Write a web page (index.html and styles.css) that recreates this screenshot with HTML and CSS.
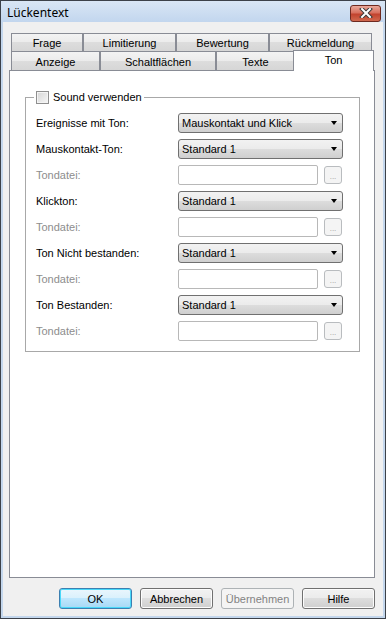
FILE: index.html
```html
<!DOCTYPE html>
<html lang="de">
<head>
  <meta charset="UTF-8">
  <title>Lückentext</title>
  <link rel="stylesheet" href="styles.css">
</head>
<body>
  <div class="window">
    <!-- Title bar -->
    <div class="titlebar">
      <span class="title">Lückentext</span>
      <div class="close">
        <svg width="14" height="10" viewBox="0 0 14 10">
          <path d="M3 1 L11 9 M11 1 L3 9" stroke="#3a3a3a" stroke-width="4" stroke-linecap="square"/>
          <path d="M3 1 L11 9 M11 1 L3 9" stroke="#ffffff" stroke-width="2" stroke-linecap="square"/>
        </svg>
      </div>
    </div>

    <div class="client">
      <!-- Tabs -->
      <div class="tab-row">
        <div class="tab tab-frage">Frage</div>
        <div class="tab tab-limit">Limitierung</div>
        <div class="tab tab-bewertung">Bewertung</div>
        <div class="tab tab-rueck">Rückmeldung</div>
      </div>
      <div class="tab-row front">
        <div class="tab tab-anzeige">Anzeige</div>
        <div class="tab tab-schalt">Schaltflächen</div>
        <div class="tab tab-texte">Texte</div>
        <div class="tab tab-ton selected">Ton</div>
      </div>

      <!-- Tab page -->
      <div class="panel">
        <fieldset class="group">
          <legend>
            <span class="checkbox"></span>
            <span>Sound verwenden</span>
          </legend>
          <div class="form">
            <label>Ereignisse mit Ton:</label>
            <div class="combo"><span>Mauskontakt und Klick</span><i class="arrow"></i></div>

            <label>Mauskontakt-Ton:</label>
            <div class="combo"><span>Standard 1</span><i class="arrow"></i></div>

            <label class="disabled">Tondatei:</label>
            <div class="file"><div class="textbox"></div><div class="browse">...</div></div>

            <label>Klickton:</label>
            <div class="combo"><span>Standard 1</span><i class="arrow"></i></div>

            <label class="disabled">Tondatei:</label>
            <div class="file"><div class="textbox"></div><div class="browse">...</div></div>

            <label>Ton Nicht bestanden:</label>
            <div class="combo"><span>Standard 1</span><i class="arrow"></i></div>

            <label class="disabled">Tondatei:</label>
            <div class="file"><div class="textbox"></div><div class="browse">...</div></div>

            <label>Ton Bestanden:</label>
            <div class="combo"><span>Standard 1</span><i class="arrow"></i></div>

            <label class="disabled">Tondatei:</label>
            <div class="file"><div class="textbox"></div><div class="browse">...</div></div>
          </div>
        </fieldset>
      </div>

      <!-- Dialog buttons -->
      <div class="buttons">
        <button class="default">OK</button>
        <button>Abbrechen</button>
        <button disabled>Übernehmen</button>
        <button>Hilfe</button>
      </div>
    </div>
  </div>
</body>
</html>
```

FILE: styles.css
```css
* {
  margin: 0;
  padding: 0;
  box-sizing: border-box;
}

body {
  width: 386px;
  height: 619px;
  overflow: hidden;
  font-family: "Liberation Sans", Arial, sans-serif;
  font-size: 11px;
  color: #000;
  background: #fff;
}

.window {
  width: 386px;
  height: 619px;
  display: flex;
  flex-direction: column;
  border: 1px solid #3c4149;
  padding: 0 2px 2px 2px;
  background: #c4d7ed;
}

/* Title bar */
.titlebar {
  height: 21px;
  margin: 0 -2px;
  padding: 0 4px 0 6px;
  display: flex;
  align-items: center;
  background: linear-gradient(#d9e6f5, #c2d6ee);
}

.title {
  font-family: "Noto Sans", "Open Sans", sans-serif;
  font-size: 12px;
  padding-top: 1px;
}

.close {
  margin-left: auto;
  width: 31px;
  height: 17px;
  margin-top: 3px;
  border: 1px solid #6e2a20;
  border-radius: 3px;
  background: linear-gradient(#e9a99b, #d8705e 45%, #c2432e 55%, #d0684e);
  display: flex;
  align-items: center;
  justify-content: center;
}

.client {
  flex: 1;
  display: flex;
  flex-direction: column;
  background: #f0f0f0;
  padding: 11px 8px 0 6px;
}

/* Tabs */
.tab-row {
  display: flex;
  margin-left: 2px;
}

.tab {
  height: 18px;
  border: 1px solid #898c95;
  border-bottom: none;
  background: linear-gradient(#f3f3f3, #ebebeb 50%, #dddddd 50%, #d6d6d6);
  display: flex;
  align-items: center;
  justify-content: center;
  padding-top: 1px;
}

.front .tab {
  height: 19px;
}

.tab-frage { width: 72px; }
.tab-limit { width: 93px; }
.tab-bewertung { width: 93px; }
.tab-rueck { width: 103px; }
.tab-anzeige { width: 89px; }
.tab-schalt { width: 116px; }
.tab-texte { width: 79px; }
.tab-ton { width: 77px; }

.tab.selected {
  position: relative;
  z-index: 1;
  width: 81px;
  height: 21px;
  margin: -1px -2px -1px -2px;
  background: #fff;
  align-items: flex-start;
  padding-top: 3px;
}

/* Tab page */
.panel {
  flex: 1;
  border: 1px solid #898c95;
  background: #fff;
  padding: 19px 14px 0 15px;
}

.group {
  border: 1px solid #a8a8a8;
  padding: 9px 16px 10px 10px;
}

.group legend {
  height: 14px;
  margin-left: -2px;
  padding: 0 2px;
  display: flex;
  align-items: center;
  gap: 4px;
}

.checkbox {
  width: 13px;
  height: 13px;
  border: 1px solid #8f8f8f;
  background: linear-gradient(135deg, #d6d6d6, #f6f6f6);
  box-shadow: inset 0 0 0 1px #f4f4f4;
}

.form {
  display: grid;
  grid-template-columns: 142px 165px;
  grid-auto-rows: 20px;
  row-gap: 6px;
  align-items: center;
}

.form label {
  padding-bottom: 1px;
}

.form label.disabled {
  color: #8d8d8d;
}

.combo {
  height: 20px;
  border: 1px solid #707070;
  border-radius: 3px;
  background: linear-gradient(#f2f2f2, #ebebeb 50%, #dddddd 50%, #cfcfcf);
  display: flex;
  align-items: center;
  padding-left: 3px;
}

.arrow {
  margin-left: auto;
  margin-right: 5px;
  width: 0;
  height: 0;
  border-left: 3.5px solid transparent;
  border-right: 3.5px solid transparent;
  border-top: 4px solid #000;
}

.file {
  display: flex;
  align-items: center;
  gap: 6px;
}

.textbox {
  width: 140px;
  height: 20px;
  border: 1px solid #b8b8b8;
  border-radius: 2px;
  background: #fff;
}

.browse {
  width: 18px;
  height: 18px;
  border: 1px solid #b9bcbf;
  border-radius: 3px;
  background: #f4f4f4;
  color: #9a9a9a;
  font-size: 8px;
  display: flex;
  justify-content: center;
  align-items: center;
  padding-top: 2px;
}

/* Dialog buttons */
.buttons {
  display: flex;
  justify-content: flex-end;
  gap: 8px;
  padding: 10px 0 7px;
}

button {
  width: 73px;
  height: 21px;
  font-family: "Liberation Sans", Arial, sans-serif;
  font-size: 11px;
  color: #000;
  border: 1px solid #707070;
  border-radius: 3px;
  background: linear-gradient(#f2f2f2, #ebebeb 50%, #dddddd 50%, #cfcfcf);
  box-shadow: inset 0 0 0 1px #fcfcfc;
}

button.default {
  border-color: #3c7fb1;
  box-shadow: inset 0 0 0 1px #48d8f9;
  background: linear-gradient(#eaf6fd, #d9f0fc 50%, #bee6fd 50%, #a7d9f5);
}

button:disabled {
  border-color: #adb2b5;
  background: #f4f4f4;
  color: #838383;
  box-shadow: none;
}
```
